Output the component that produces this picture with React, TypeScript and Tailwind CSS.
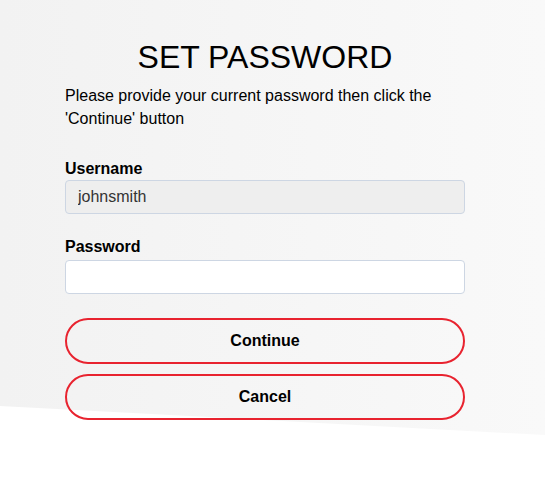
import React from "react";

export default function App() {
  return (
    <div className="relative min-h-[488px] w-full overflow-hidden bg-white font-['Liberation_Sans',Arial,sans-serif] text-black">
      {/* grey backdrop with slanted bottom edge */}
      <div className="absolute inset-0 bg-gradient-to-r from-[#f2f2f2] to-[#f9f9f9] [clip-path:polygon(0_0,100%_0,100%_435px,0_406px)]" />

      <div className="relative ml-[65px] w-[400px] pt-[39px]">
        <h1 className="text-center text-[32px] leading-[36px]">SET PASSWORD</h1>
        <p className="mt-[9px] text-[16px] leading-[23px]">
          Please provide your current password then click the 'Continue' button
        </p>

        <form className="mt-[29px] flex flex-col">
          <label className="text-[16px] font-bold leading-[20px]">Username</label>
          <input
            readOnly
            value="johnsmith"
            className="mt-[1px] h-[34px] rounded-[4px] border border-[#cdd6e3] bg-[#eeeeee] px-[12px] text-[16px] text-[#333333] outline-none"
          />

          <label className="mt-[23px] text-[16px] font-bold leading-[20px]">Password</label>
          <input
            type="password"
            className="mt-[3px] h-[34px] rounded-[4px] border border-[#cdd6e3] bg-white px-[12px] text-[16px] outline-none"
          />

          <button
            type="button"
            className="mt-[24px] h-[46px] rounded-full border-2 border-[#e8232f] text-[16px] font-bold"
          >
            Continue
          </button>
          <button
            type="button"
            className="mt-[10px] h-[46px] rounded-full border-2 border-[#e8232f] text-[16px] font-bold"
          >
            Cancel
          </button>
        </form>
      </div>
    </div>
  );
}
